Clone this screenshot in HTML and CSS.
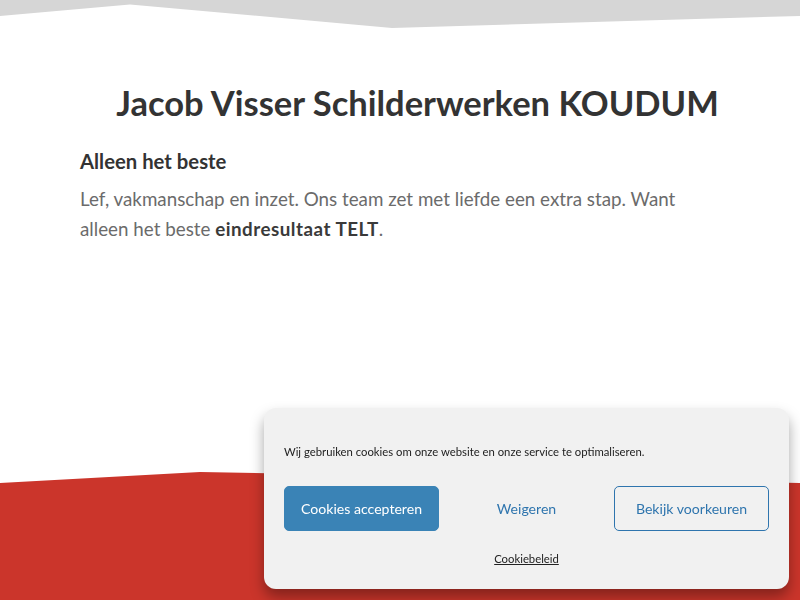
FILE: index.html
```html
<!DOCTYPE html>
<html lang="nl">
<head>
<meta charset="utf-8">
<title>Jacob Visser Schilderwerken KOUDUM</title>
<link rel="stylesheet" href="styles.css">
</head>
<body>
<div class="page">
  <svg class="top-wave" width="800" height="28" viewBox="0 0 800 28" preserveAspectRatio="none" aria-hidden="true">
    <polygon points="0,0 800,0 800,16 392,28 130,4.5 0,16" fill="#d6d6d6"/>
  </svg>
  <main class="content">
    <h1 class="title">Jacob Visser Schilderwerken KOUDUM</h1>
    <h2 class="subtitle">Alleen het beste</h2>
    <p class="lead">Lef, vakmanschap en inzet. Ons team zet met liefde een extra stap. Want alleen het beste <strong>eindresultaat TELT</strong>.</p>
  </main>
  <div class="footer-band">
    <svg class="red-wave" width="800" height="128" viewBox="0 0 800 128" preserveAspectRatio="none" aria-hidden="true">
      <polygon points="0,11 200,0 800,11 800,128 0,128" fill="#cb352b"/>
    </svg>
  </div>
</div>

<div class="cookie-banner" role="dialog" aria-label="Cookies">
  <p class="cookie-text">Wij gebruiken cookies om onze website en onze service te optimaliseren.</p>
  <div class="cookie-buttons">
    <button class="btn btn-accept">Cookies accepteren</button>
    <button class="btn btn-deny">Weigeren</button>
    <button class="btn btn-prefs">Bekijk voorkeuren</button>
  </div>
  <div class="cookie-links"><a href="#" class="cookie-link">Cookiebeleid</a></div>
</div>
</body>
</html>
```

FILE: styles.css
```css
* { box-sizing: border-box; }
html, body {
  margin: 0;
  padding: 0;
  background: #ffffff;
  overflow: hidden;
}
body {
  font-family: "Lato", "Liberation Sans", sans-serif;
  width: 800px;
  height: 600px;
}
.page {
  display: flex;
  flex-direction: column;
  height: 600px;
}
.top-wave {
  display: block;
  flex: 0 0 auto;
}
.content {
  flex: 0 0 444px;
  padding: 55px 45px 0 80px;
}
.title {
  margin: 0;
  font-size: 34.5px;
  line-height: 40px;
  font-weight: 700;
  color: #333333;
  text-align: center;
}
.subtitle {
  margin: 23px 0 0;
  font-size: 20.3px;
  line-height: 30px;
  font-weight: 700;
  color: #333333;
}
.lead {
  margin: 8px 0 0;
  max-width: 610px;
  font-size: 18.8px;
  line-height: 30px;
  color: #6b6b6b;
}
.lead strong {
  color: #3a3a3a;
  font-weight: 700;
  letter-spacing: 0.5px;
}
.footer-band {
  flex: 1 1 auto;
}
.red-wave {
  display: block;
}
.cookie-banner {
  position: fixed;
  left: 264px;
  top: 408px;
  width: 525px;
  height: 181px;
  background: #f1f1f1;
  border-radius: 12px;
  box-shadow: 0 8px 14px rgba(0, 0, 0, 0.35);
  padding: 36px 20px 0;
  font-family: "Lato", "Liberation Sans", sans-serif;
}
.cookie-text {
  margin: 0;
  font-size: 11.3px;
  line-height: 16px;
  color: #222222;
}
.cookie-buttons {
  display: grid;
  grid-template-columns: repeat(3, 1fr);
  gap: 10px;
  margin-top: 26px;
}
.btn {
  height: 45px;
  font-family: inherit;
  font-size: 14.1px;
  border-radius: 5px;
  cursor: pointer;
}
.btn-accept {
  background: #3a83b6;
  border: 1px solid #3a83b6;
  color: #ffffff;
}
.btn-deny {
  background: transparent;
  border: 1px solid transparent;
  color: #2f75ae;
}
.btn-prefs {
  background: transparent;
  border: 1px solid #2f75ae;
  color: #2f75ae;
}
.cookie-links {
  text-align: center;
  margin-top: 16px;
}
.cookie-link {
  font-size: 11.3px;
  line-height: 16px;
  color: #222222;
  text-decoration: underline;
}
```
